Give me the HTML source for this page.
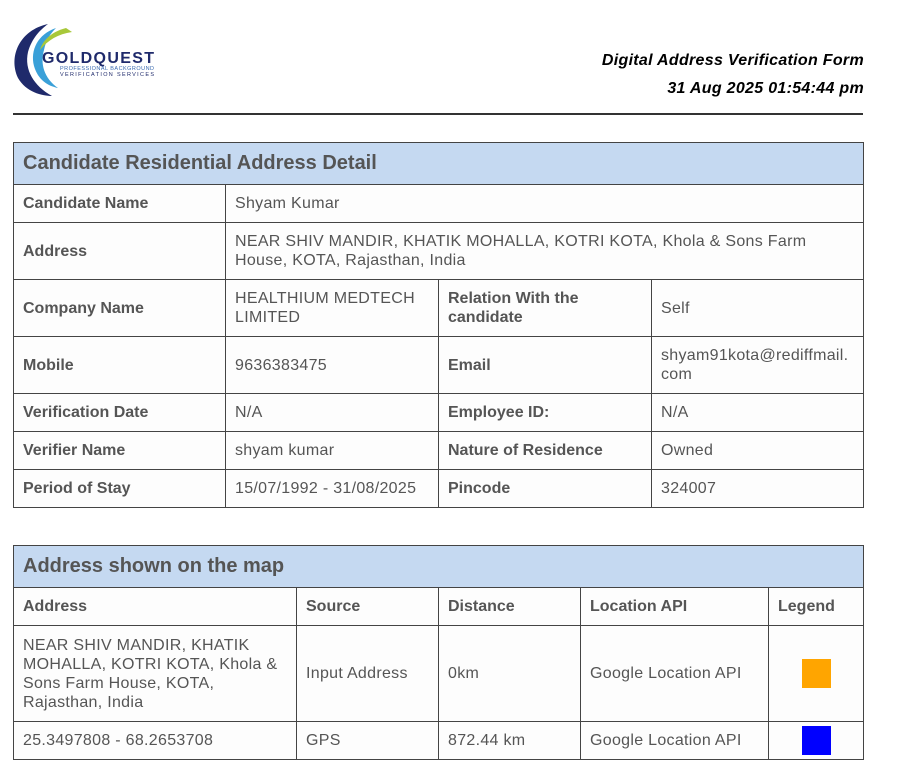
<!DOCTYPE html>
<html><head><meta charset="utf-8"><style>
body{margin:0;background:#fff;font-family:"Liberation Sans",Arial,sans-serif;color:#555;width:897px;height:780px;position:relative;overflow:hidden}
.t{position:absolute;left:13px;width:850px;border-collapse:collapse;table-layout:fixed;font-size:16px;letter-spacing:0.3px}
.t td{border:1px solid #444;padding:0 9px;vertical-align:middle;line-height:19px;background:#fdfdfd}
.t td.h{background:#c5d9f1;font-size:20px;font-weight:bold;color:#555;letter-spacing:0}
.t b{color:#555;letter-spacing:0}
.title{position:absolute;right:33px;font-weight:bold;font-style:italic;font-size:16px;color:#000;letter-spacing:0.3px}
.sq{width:29px;height:29px;margin:0 auto}
</style></head><body>
<svg style="position:absolute;left:8px;top:20px" width="160" height="80" viewBox="0 0 160 80">
<path d="M40 4 C12 10 0 36 10 58 C18 72 34 76 44 76 C26 66 16 50 20 32 C24 18 32 10 40 4Z" fill="#1f2a6b"/>
<path d="M48 8 C30 14 22 30 26 46 C30 60 40 66 50 68 C36 58 32 44 36 30 C38 20 42 14 48 8Z" fill="#3aa0d8"/>
<path d="M58 8 C42 12 34 22 32 30 C40 20 50 14 64 12Z" fill="#a8c83a"/>
<text x="34" y="43" font-family="Liberation Sans" font-weight="bold" font-size="16" fill="#1f2a6b" textLength="112">GOLDQUEST</text>
<text x="52" y="50" font-family="Liberation Sans" font-size="5.5" fill="#3a6ab0" textLength="94">PROFESSIONAL BACKGROUND</text>
<text x="52" y="56" font-family="Liberation Sans" font-size="5.5" fill="#1f2a6b" textLength="94">VERIFICATION SERVICES</text>
</svg>
<div class="title" style="top:52px">Digital Address Verification Form</div>
<div class="title" style="top:80px">31 Aug 2025 01:54:44 pm</div>
<div style="position:absolute;left:13px;top:113px;width:850px;height:2px;background:#333"></div>

<table class="t" style="top:142px">
<colgroup><col style="width:212px"><col style="width:213px"><col style="width:213px"><col style="width:212px"></colgroup>
<tr style="height:42px"><td class="h" colspan="4">Candidate Residential Address Detail</td></tr>
<tr style="height:38px"><td><b>Candidate Name</b></td><td colspan="3">Shyam Kumar</td></tr>
<tr style="height:57px"><td><b>Address</b></td><td colspan="3">NEAR SHIV MANDIR, KHATIK MOHALLA, KOTRI KOTA, Khola &amp; Sons Farm<br>House, KOTA, Rajasthan, India</td></tr>
<tr style="height:57px"><td><b>Company Name</b></td><td>HEALTHIUM MEDTECH LIMITED</td><td><b>Relation With the candidate</b></td><td>Self</td></tr>
<tr style="height:57px"><td><b>Mobile</b></td><td>9636383475</td><td><b>Email</b></td><td>shyam91kota@rediffmail.<br>com</td></tr>
<tr style="height:38px"><td><b>Verification Date</b></td><td>N/A</td><td><b>Employee ID:</b></td><td>N/A</td></tr>
<tr style="height:38px"><td><b>Verifier Name</b></td><td>shyam kumar</td><td><b>Nature of Residence</b></td><td>Owned</td></tr>
<tr style="height:38px"><td><b>Period of Stay</b></td><td>15/07/1992 - 31/08/2025</td><td><b>Pincode</b></td><td>324007</td></tr>
</table>

<table class="t" style="top:545px">
<colgroup><col style="width:283px"><col style="width:142px"><col style="width:142px"><col style="width:188px"><col style="width:95px"></colgroup>
<tr style="height:42px"><td class="h" colspan="5">Address shown on the map</td></tr>
<tr style="height:38px"><td><b>Address</b></td><td><b>Source</b></td><td><b>Distance</b></td><td><b>Location API</b></td><td><b>Legend</b></td></tr>
<tr style="height:96px"><td>NEAR SHIV MANDIR, KHATIK MOHALLA, KOTRI KOTA, Khola &amp; Sons Farm House, KOTA, Rajasthan, India</td><td>Input Address</td><td>0km</td><td>Google Location API</td><td><div class="sq" style="background:#ffa500"></div></td></tr>
<tr style="height:38px"><td>25.3497808 - 68.2653708</td><td>GPS</td><td>872.44 km</td><td>Google Location API</td><td><div class="sq" style="background:#0000ff"></div></td></tr>
</table>
</body></html>
